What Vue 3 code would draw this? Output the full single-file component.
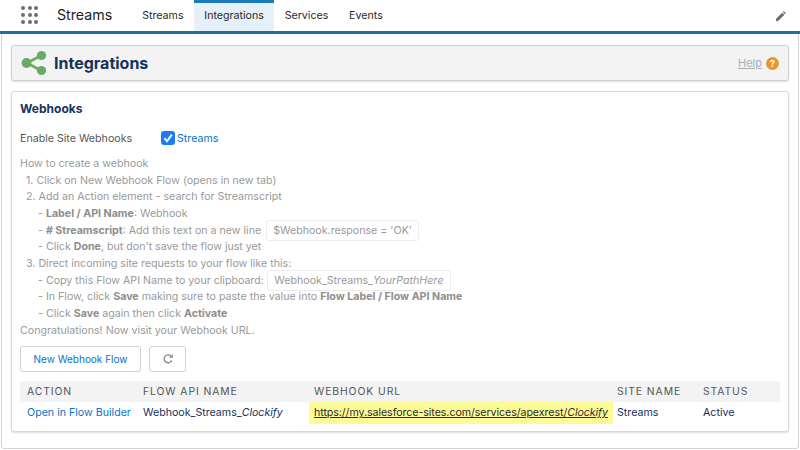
<template>
  <div class="page">
    <!-- Top navigation -->
    <header class="nav">
      <div class="waffle">
        <span v-for="n in 9" :key="n" class="dot"></span>
      </div>
      <span class="app-name">Streams</span>
      <nav class="tabs">
        <a
          v-for="tab in tabs"
          :key="tab"
          class="tab"
          :class="{ active: tab === 'Integrations' }"
        >{{ tab }}</a>
      </nav>
      <svg class="pencil" viewBox="0 0 14 14" width="11" height="11">
        <path d="M1 13l.7-3.4L9.2 2.1l2.7 2.7-7.5 7.5z" fill="#6b6b6b" />
        <path d="M10 1.3l.8-.7c.3-.3.7-.3 1 0l1.6 1.6c.3.3.3.7 0 1l-.7.8z" fill="#6b6b6b" />
      </svg>
    </header>

    <main class="shell">
      <!-- Page header -->
      <section class="page-header">
        <svg class="share" viewBox="0 0 26 26" width="26" height="26">
          <path d="M20 5.5L6 13l14 7.5" fill="none" stroke="#6aa968" stroke-width="2.6" />
          <circle cx="20.5" cy="5.5" r="4.6" fill="#6aa968" />
          <circle cx="5.5" cy="13" r="4.9" fill="#6aa968" />
          <circle cx="20.5" cy="20.5" r="4.6" fill="#6aa968" />
        </svg>
        <h1>Integrations</h1>
        <a class="help">Help</a>
        <span class="help-icon">?</span>
      </section>

      <!-- Webhooks card -->
      <section class="card">
        <h2>Webhooks</h2>
        <div class="enable-row">
          <span class="enable-label">Enable Site Webhooks</span>
          <span class="checkbox">
            <svg viewBox="0 0 14 14" width="14" height="14">
              <rect width="14" height="14" rx="3" fill="#1f7cf0" />
              <path d="M3.4 7.2l2.6 3 4.8-6.6" fill="none" stroke="#fff" stroke-width="1.8" />
            </svg>
          </span>
          <a class="link">Streams</a>
        </div>

        <div class="steps">
          <div>How to create a webhook</div>
          <div class="lvl1">1. Click on New Webhook Flow (opens in new tab)</div>
          <div class="lvl1">2. Add an Action element - search for Streamscript</div>
          <div class="lvl2">- <b>Label / API Name</b>: Webhook</div>
          <div class="lvl2">- <b># Streamscript</b>: Add this text on a new line <code>$Webhook.response = 'OK'</code></div>
          <div class="lvl2">- Click <b>Done</b>, but don't save the flow just yet</div>
          <div class="lvl1">3. Direct incoming site requests to your flow like this:</div>
          <div class="lvl2">- Copy this Flow API Name to your clipboard: <code class="tight">Webhook_Streams_<i>YourPathHere</i></code></div>
          <div class="lvl2">- In Flow, click <b>Save</b> making sure to paste the value into <b>Flow Label / Flow API Name</b></div>
          <div class="lvl2">- Click <b>Save</b> again then click <b>Activate</b></div>
          <div>Congratulations! Now visit your Webhook URL.</div>
        </div>

        <div class="actions">
          <button class="btn new-flow">New Webhook Flow</button>
          <button class="btn refresh">
            <svg viewBox="0 0 14 14" width="12" height="12">
              <path d="M11.3 8.6A4.6 4.6 0 1 1 10.4 3.6" fill="none" stroke="#8a8a8a" stroke-width="1.6" />
              <path d="M12.6 1.2v4.4H8.2z" fill="#8a8a8a" />
            </svg>
          </button>
        </div>

        <div class="table">
          <div class="cell head c-action">ACTION</div>
          <div class="cell head c-flow">FLOW API NAME</div>
          <div class="cell head c-url">WEBHOOK URL</div>
          <div class="cell head c-site">SITE NAME</div>
          <div class="cell head c-status">STATUS</div>
          <div class="cell c-action"><a class="link">Open in Flow Builder</a></div>
          <div class="cell c-flow">Webhook_Streams_<i>Clockify</i></div>
          <div class="cell c-url url"><a>https://my.salesforce-sites.com/services/apexrest/<i>Clockify</i></a></div>
          <div class="cell c-site">Streams</div>
          <div class="cell c-status">Active</div>
        </div>
      </section>
    </main>
  </div>
</template>

<script setup>
const tabs = ['Streams', 'Integrations', 'Services', 'Events']
</script>

<style>
html,
body {
  margin: 0;
  background: #fff;
}
</style>

<style scoped>
.page {
  width: 800px;
  height: 450px;
  overflow: hidden;
  box-sizing: border-box;
  display: flex;
  flex-direction: column;
  font-family: Inter, "Liberation Sans", sans-serif;
  font-size: 10.65px;
  color: #16325c;
}

.nav {
  height: 34px;
  flex: none;
  box-sizing: border-box;
  border-bottom: 3px solid #1b6fa5;
  display: flex;
  align-items: stretch;
  background: #fff;
}

.waffle {
  display: grid;
  grid-template-columns: repeat(3, 4px);
  gap: 2.5px;
  margin: 6px 0 0 21px;
  height: 18px;
}

.dot {
  width: 4px;
  height: 4px;
  border-radius: 50%;
  background: #6e6e6e;
}

.app-name {
  margin-left: 19px;
  font-size: 14.2px;
  line-height: 30px;
  color: #1c1c1c;
}

.tabs {
  display: flex;
  margin-left: 19.6px;
}

.tab {
  padding: 3px 10.4px 0;
  line-height: 26px;
  color: #2a2a2a;
}

.tab.active {
  background: #e6f0f8;
  border-top: 3px solid #1b7ab8;
  padding-top: 0;
}

.pencil {
  margin: 11px 14px 0 auto;
}

.shell {
  flex: 1;
  margin: 0 1px 1px;
  padding: 11px 9px 0;
  border: 1px solid #d4d4d8;
  border-top: none;
  border-radius: 0 0 3px 3px;
}

.page-header {
  height: 36px;
  box-sizing: border-box;
  display: flex;
  align-items: center;
  padding: 0 9px;
  background: #f3f3f3;
  border: 1px solid #cfcfcf;
  border-radius: 3px;
  box-shadow: 0 1px 2px rgba(0, 0, 0, 0.12);
}

.share {
  margin-right: 7px;
}

h1 {
  margin: 0;
  font-size: 16px;
  font-weight: 700;
  color: #16325c;
}

.help {
  margin-left: auto;
  color: #a9adb3;
  text-decoration: underline;
  font-size: 11px;
}

.help-icon {
  margin-left: 4px;
  width: 13px;
  height: 13px;
  border-radius: 50%;
  background: #e8982a;
  color: #fff;
  font-size: 9px;
  font-weight: 700;
  line-height: 13px;
  text-align: center;
}

.card {
  margin-top: 10px;
  height: 341px;
  box-sizing: border-box;
  padding: 9px 8px 0 8px;
  background: #fff;
  border: 1px solid #d8d8d8;
  border-radius: 3px;
  box-shadow: 0 1px 2px rgba(0, 0, 0, 0.14);
}

h2 {
  margin: 0;
  font-size: 12px;
  line-height: 16px;
  font-weight: 700;
  color: #16325c;
}

.enable-row {
  margin-top: 13px;
  height: 16px;
  display: flex;
  align-items: center;
  color: #555;
}

.enable-label {
  width: 141px;
}

.checkbox {
  display: flex;
  margin-right: 2px;
}

.link {
  color: #0b72c9;
}

.steps {
  margin-top: 10px;
  line-height: 16.67px;
  color: #9a9a9a;
}

.steps b {
  font-weight: 700;
  color: #8e8e8e;
}

.lvl1 {
  padding-left: 6px;
}

.lvl2 {
  padding-left: 18px;
}

code {
  font-family: inherit;
  padding: 3px 6px;
  margin-left: 2px;
  border: 1px solid #ececec;
  border-radius: 3px;
}

code.tight {
  margin-left: 0;
  padding: 3px 6.5px;
}

.actions {
  margin-top: 7px;
  display: flex;
  gap: 8px;
}

.btn {
  height: 26px;
  box-sizing: border-box;
  background: #fff;
  border: 1px solid #d0d0d0;
  border-radius: 3px;
  font-family: inherit;
  font-size: 10px;
  color: #0b72c9;
  padding: 0;
}

.new-flow {
  width: 121px;
}

.refresh {
  width: 37px;
  display: flex;
  align-items: center;
  justify-content: center;
}

.table {
  margin-top: 9px;
  display: grid;
  grid-template-columns: 116px 173px 304px 84px 83px;
  grid-template-rows: 21px 22px;
}

.cell {
  padding-left: 7px;
  line-height: 21px;
  white-space: nowrap;
}

.head {
  background: #f3f3f3;
  color: #54565a;
  letter-spacing: 0.9px;
  font-size: 10.4px;
}

.c-url {
  padding-left: 5px;
}

.c-site {
  padding-left: 4px;
}

.c-status {
  padding-left: 6px;
}

.url {
  background: #fdfb96;
  color: #2b2b2b;
  letter-spacing: -0.06px;
}

.url a {
  text-decoration: underline;
}
</style>
